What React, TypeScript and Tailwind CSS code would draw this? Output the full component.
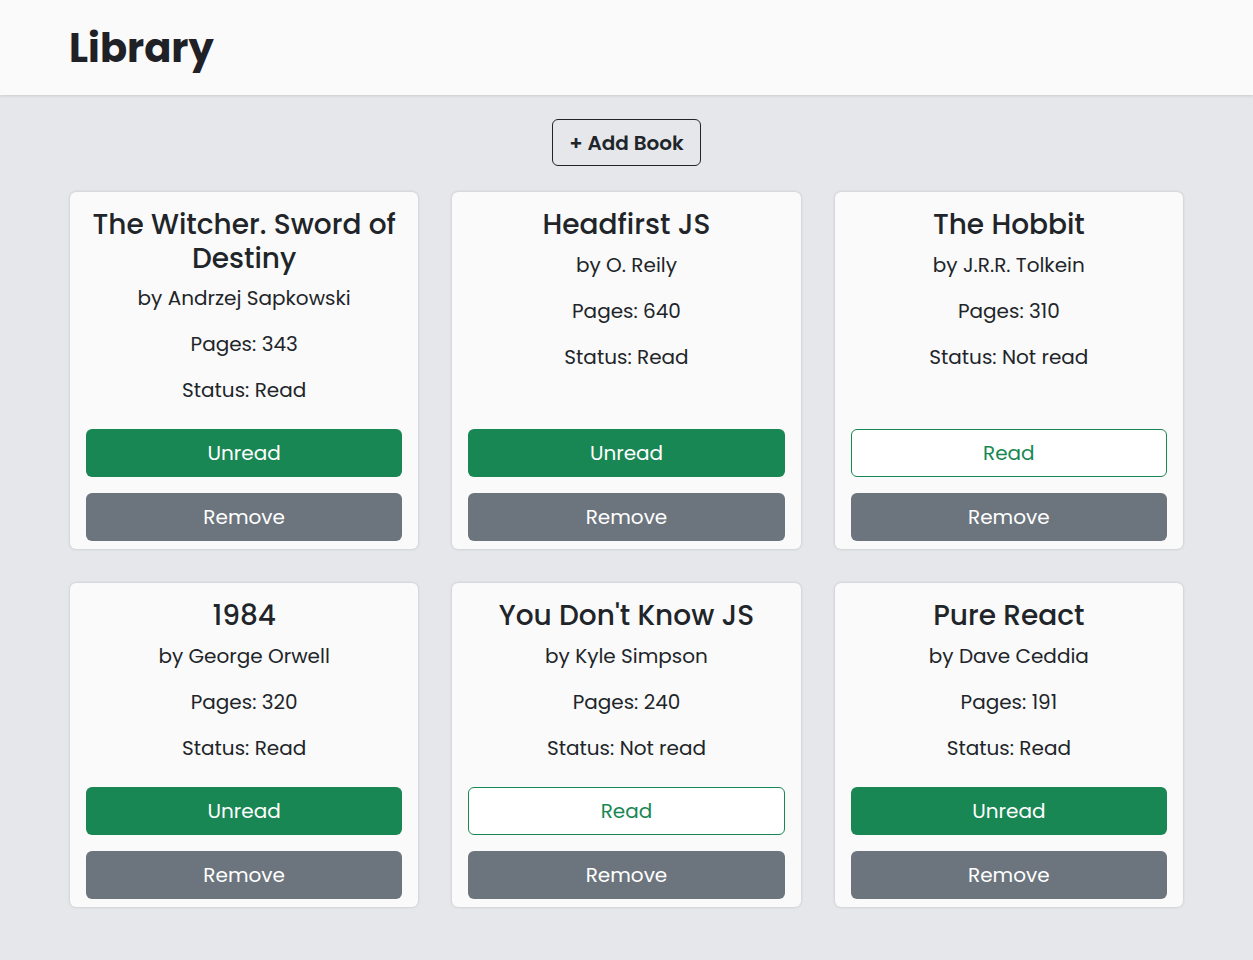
import React from 'react';

type Book = {
  title: string;
  author: string;
  pages: number;
  read: boolean;
};

const books: Book[] = [
  { title: 'The Witcher. Sword of Destiny', author: 'Andrzej Sapkowski', pages: 343, read: true },
  { title: 'Headfirst JS', author: 'O. Reily', pages: 640, read: true },
  { title: 'The Hobbit', author: 'J.R.R. Tolkein', pages: 310, read: false },
  { title: '1984', author: 'George Orwell', pages: 320, read: true },
  { title: "You Don't Know JS", author: 'Kyle Simpson', pages: 240, read: false },
  { title: 'Pure React', author: 'Dave Ceddia', pages: 191, read: true },
];

const BookCard = ({ book }: { book: Book }) => {
  return (
    <div className="flex flex-col bg-[#fafafa] rounded-md shadow-[0_0_3px_rgba(0,0,0,0.18)] px-4 pt-4 pb-2 text-center text-[#212529]">
      <h2 className="text-[28px] leading-[33.6px] font-medium">{book.title}</h2>
      <p className="mt-2 text-[20px] leading-[30px]">by {book.author}</p>
      <p className="mt-4 text-[20px] leading-[30px]">Pages: {book.pages}</p>
      <p className="mt-4 text-[20px] leading-[30px]">Status: {book.read ? 'Read' : 'Not read'}</p>

      <div className="mt-auto pt-6 flex flex-col gap-4">
        {book.read ? (
          <button className="h-12 rounded-md bg-[#198754] text-white text-[20px] font-normal">
            Unread
          </button>
        ) : (
          <button className="h-12 rounded-md border border-[#198754] bg-white text-[#198754] text-[20px] font-normal">
            Read
          </button>
        )}
        <button className="h-12 rounded-md bg-[#6c757d] text-white text-[20px] font-normal">
          Remove
        </button>
      </div>
    </div>
  );
};

const App = () => {
  return (
    <div
      className="min-h-screen bg-[#e5e7eb]"
      style={{ fontFamily: 'Poppins, Inter, "Noto Sans", sans-serif' }}
    >
      <header className="h-[95px] bg-[#fafafa] shadow-[0_1px_3px_rgba(0,0,0,0.12)] flex items-center px-[69px]">
        <h1 className="text-[40px] font-bold text-[#1f2126]">Library</h1>
      </header>

      <div className="flex justify-center pt-6">
        <button className="h-[47px] px-4 rounded-md border border-[#212529] text-[20px] font-semibold text-[#212529]">
          + Add Book
        </button>
      </div>

      <main className="grid grid-cols-3 gap-[34px] px-[70px] pt-[26px] pb-12">
        {books.map((book) => (
          <BookCard key={book.title} book={book} />
        ))}
      </main>
    </div>
  );
};

export default App;
